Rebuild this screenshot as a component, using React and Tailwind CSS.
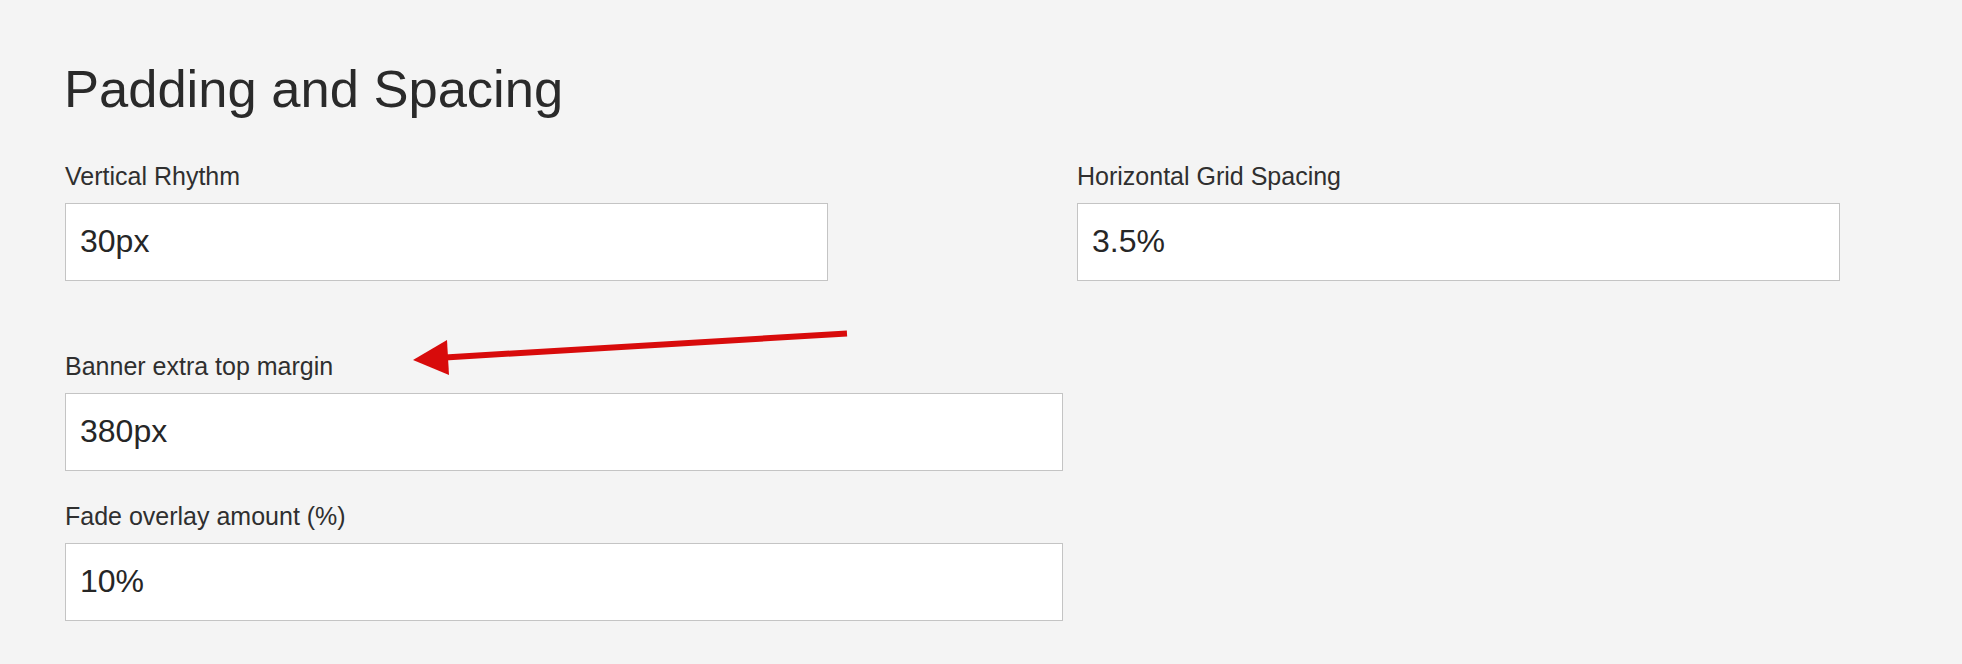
const Field = ({ label, value, width }) => (
    <div className="flex flex-col">
        <label className="text-[25px] leading-none text-[#2f2f2f] mb-[14px]">{label}</label>
        <input
            type="text"
            defaultValue={value}
            className={`${width} h-[78px] bg-white border border-[#c4c4c4] pl-[14px] text-[32px] text-[#262626] outline-none`}
            style={{ fontFamily: "inherit" }}
        />
    </div>
)

export default function App() {
    return (
        <div className="relative min-h-[664px] w-[1962px] bg-[#f4f4f4] pl-[65px] pt-[63px]"
            style={{ fontFamily: '"Liberation Sans", Arial, sans-serif' }}>
            <h1 className="text-[52.5px] leading-none text-[#2a2a2a] mb-[48px] -ml-[1px]">Padding and Spacing</h1>

            {/* two column row */}
            <div className="flex gap-[249px] mb-[73px]">
                <Field label="Vertical Rhythm" value="30px" width="w-[763px]" />
                <Field label="Horizontal Grid Spacing" value="3.5%" width="w-[763px]" />
            </div>

            <div className="flex flex-col gap-[33px]">
                <Field label="Banner extra top margin" value="380px" width="w-[998px]" />
                <Field label="Fade overlay amount (%)" value="10%" width="w-[998px]" />
            </div>

            {/* annotation arrow */}
            <svg className="absolute left-0 top-0 pointer-events-none" width="1962" height="664">
                <line x1="847" y1="333.5" x2="445" y2="357.5" stroke="#d80b0b" strokeWidth="6" />
                <polygon points="413,360 447,340 449,375" fill="#d80b0b" />
            </svg>
        </div>
    )
}
